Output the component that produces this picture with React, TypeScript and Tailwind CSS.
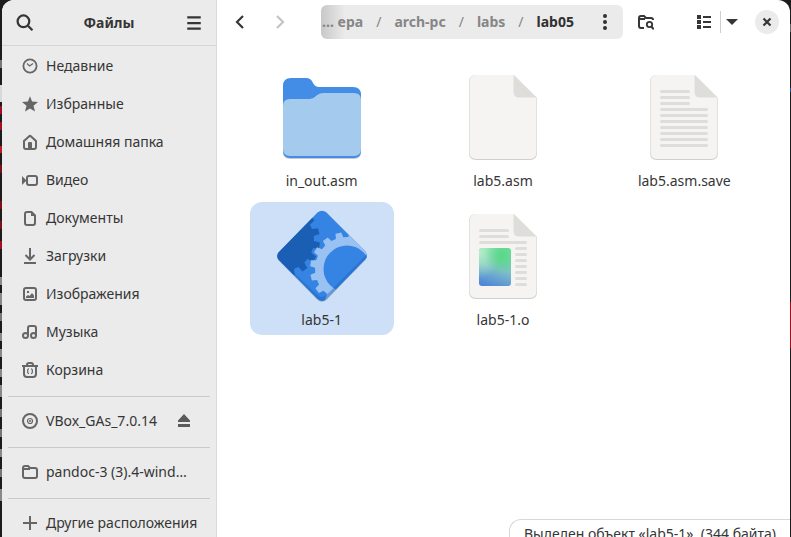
import type { ReactNode } from "react";

function Glyph({ children, size = 16 }: { children: ReactNode; size?: number }) {
  return (
    <svg
      width={size}
      height={size}
      viewBox="0 0 16 16"
      fill="none"
      stroke="currentColor"
      strokeWidth="2"
      className="shrink-0"
      aria-hidden="true"
    >
      {children}
    </svg>
  );
}

const places: { name: string; icon: ReactNode }[] = [
  {
    name: "Недавние",
    icon: (
      <>
        <circle cx="8" cy="8" r="6.6" strokeWidth="1.8" />
        <path d="M5 5.5 7.6 8 11 5.5" strokeWidth="1.2" />
      </>
    ),
  },
  {
    name: "Избранные",
    icon: (
      <path
        d="M8 0.3 10.1 5.5 16 6 11.5 9.8 13 15.6 8 12.4 3 15.6 4.5 9.8 0 6 5.9 5.5Z"
        fill="currentColor"
        stroke="none"
      />
    ),
  },
  {
    name: "Домашняя папка",
    icon: (
      <>
        <path d="M2 7 7.2 2.2Q8 1.5 8.8 2.2L14 7V13Q14 15 12 15H4Q2 15 2 13Z" />
        <path d="M6 15V9Q6 8 7 8H9Q10 8 10 9V15Z" fill="currentColor" stroke="none" />
      </>
    ),
  },
  {
    name: "Видео",
    icon: (
      <>
        <rect x="5" y="4" width="10" height="9" rx="2" />
        <path d="M0 4 4 8V9L0 13Z" fill="currentColor" stroke="none" />
      </>
    ),
  },
  {
    name: "Документы",
    icon: (
      <>
        <path d="M5 2H9.5L13 5.5V13Q13 15 11 15H5Q3 15 3 13V4Q3 2 5 2Z" />
        <path d="M9 1V6H14Z" fill="currentColor" stroke="none" />
      </>
    ),
  },
  {
    name: "Загрузки",
    icon: <path d="M8 0V11M3.5 7 8 11.5 12.5 7M2 15H14" />,
  },
  {
    name: "Изображения",
    icon: (
      <>
        <rect x="2" y="2" width="12" height="12" rx="2" />
        <path
          d="M4 12V10.5L6 9 7.5 10 10 7 12 9.5V12ZM5 5H7V7H5Z"
          fill="currentColor"
          stroke="none"
        />
      </>
    ),
  },
  {
    name: "Музыка",
    icon: (
      <>
        <path d="M6 11.5V4Q6 2 8 2H12Q14 2 14 4V11.5" />
        <circle cx="3.5" cy="11.5" r="2.5" />
        <circle cx="11.5" cy="11.5" r="2.5" />
      </>
    ),
  },
  {
    name: "Корзина",
    icon: (
      <>
        <path d="M0 4H16M5 4V3Q5 1 7 1H9Q11 1 11 3V4M2 4V12Q2 15 5 15H11Q14 15 14 12V4" />
        <path d="M6.7 6.5 5.7 8V10.5L6.7 12M9.3 6.5 10.3 8V10.5L9.3 12" strokeWidth="1.2" />
      </>
    ),
  },
];

function Place({ name, icon, children }: { name: string; icon: ReactNode; children?: ReactNode }) {
  return (
    <li className="flex h-[38px] items-center pl-5">
      <a href="#" className="flex min-w-0 flex-1 items-center gap-2">
        <span className="text-[#666666]">
          <Glyph>{icon}</Glyph>
        </span>
        <span className="whitespace-nowrap">{name}</span>
      </a>
      {children}
    </li>
  );
}

function Divider() {
  return <li role="separator" className="mx-1.5 mb-[5px] mt-[7px] h-px bg-[#cacaca]" />;
}

function Sidebar() {
  return (
    <aside className="flex w-[215px] shrink-0 flex-col border-r border-[#dadada] bg-[#ebebeb]">
      <header className="flex h-[46px] shrink-0 items-center justify-between border-b border-[#d5d5d5] px-[13px]">
        <button aria-label="Поиск">
          <Glyph size={18}>
            <circle cx="7.5" cy="6.5" r="5.2" />
            <path d="m11.500 10.500 4 4" />
          </Glyph>
        </button>
        <h1 className="text-sm font-bold">Файлы</h1>
        <button aria-label="Меню">
          <Glyph size={18}>
            <path d="M2 3H14M2 8H14M2 13H14" />
          </Glyph>
        </button>
      </header>
      <ul className="mt-px text-sm">
        {places.map((p) => (
          <Place key={p.name} {...p} />
        ))}
        <Divider />
        <Place
          name="VBox_GAs_7.0.14"
          icon={
            <>
              <circle cx="8" cy="8" r="7" />
              <circle cx="8" cy="8" r="2.5" strokeWidth="1.2" />
              <circle cx="8" cy="8" r="1" fill="currentColor" stroke="none" />
            </>
          }
        >
          <button aria-label="Извлечь" className="mr-6 text-[#5a5a5a]">
            <Glyph>
              <path
                d="M8 1 14 7.5V9H2V7.5ZM2 11H14V14H2Z"
                fill="currentColor"
                stroke="none"
              />
            </Glyph>
          </button>
        </Place>
        <Divider />
        <Place
          name="pandoc-3 (3).4-wind…"
          icon={<path d="M1 12V4Q1 2 3 2H6L8 4H13Q15 4 15 6V12Q15 14 13 14H3Q1 14 1 12ZM1 5H8" />}
        />
        <Divider />
        <Place name="Другие расположения" icon={<path d="M8 1V15M1 8H15" />} />
      </ul>
    </aside>
  );
}

function Toolbar() {
  return (
    <header className="flex h-11 shrink-0 items-center pl-1.5 pr-[11px]">
      <button aria-label="Назад" className="flex size-[34px] items-center justify-center">
        <Glyph>
          <path d="M11 2 5 8 11 14" strokeWidth="2.2" />
        </Glyph>
      </button>
      <button
        aria-label="Вперёд"
        disabled
        className="ml-1.5 flex size-[34px] items-center justify-center text-[#c4c4c4]"
      >
        <Glyph>
          <path d="M5 2 11 8 5 14" strokeWidth="2.2" />
        </Glyph>
      </button>
      <nav
        aria-label="Путь"
        className="ml-6 flex h-[34px] min-w-0 flex-1 items-center rounded-md bg-[#ebebeb] bg-linear-to-r from-[#c8c8c8] from-0% to-[#ebebeb] to-8% text-sm font-bold text-[#868686]"
      >
        <ol className="flex flex-1 items-center gap-[13px] whitespace-nowrap pl-px">
          <li>
            <a href="#">… epa</a>
          </li>
          <li className="font-normal">/</li>
          <li>
            <a href="#">arch-pc</a>
          </li>
          <li className="font-normal">/</li>
          <li>
            <a href="#">labs</a>
          </li>
          <li className="font-normal">/</li>
          <li className="text-[#303030]">
            <a href="#">lab05</a>
          </li>
        </ol>
        <button aria-label="Меню папки" className="mr-2.5 text-[#303030]">
          <Glyph>
            <path
              d="M8 0a2 2 0 1 1 0 4a2 2 0 1 1 0-4M8 6a2 2 0 1 1 0 4a2 2 0 1 1 0-4M8 12a2 2 0 1 1 0 4a2 2 0 1 1 0-4"
              fill="currentColor"
              stroke="none"
            />
          </Glyph>
        </button>
      </nav>
      <button
        aria-label="Поиск в папке"
        className="ml-1.5 flex size-[34px] items-center justify-center"
      >
        <Glyph>
          <path d="M6 14H3Q1 14 1 12V4Q1 2 3 2H6L8 4H13Q15 4 15 6M1 5H7" />
          <circle cx="11.5" cy="10.5" r="2.7" strokeWidth="1.8" />
          <path d="m13.3 12.5 2.5 2.7" />
        </Glyph>
      </button>
      <button
        aria-label="Вид списком"
        className="ml-6 flex h-[34px] w-[33px] items-center justify-center"
      >
        <Glyph>
          <path d="M1 1H5V5H1ZM1 6H5V10H1ZM1 11H5V15H1Z" fill="currentColor" stroke="none" />
          <path d="M7 3H15M7 8H15M7 13H15" />
        </Glyph>
      </button>
      <span className="h-[22px] w-px bg-[#cfcfcf]" />
      <button
        aria-label="Параметры вида"
        className="flex h-[34px] w-[22px] items-center justify-center"
      >
        <Glyph>
          <path d="M2 5H14L8 11Z" fill="currentColor" stroke="none" />
        </Glyph>
      </button>
      <button
        aria-label="Закрыть"
        className="ml-3 flex size-6 items-center justify-center rounded-full bg-[#ebebeb]"
      >
        <Glyph>
          <path d="m4.5 4.5 7 7m0-7-7 7" strokeWidth="2.2" />
        </Glyph>
      </button>
    </header>
  );
}

/** Outline of a cog with trapezoid teeth; `turn` is the angle of the first tooth in degrees. */
function cog(cx: number, cy: number, body: number, tip: number, turn: number, teeth = 16) {
  const step = 360 / teeth;
  const points: string[] = [];
  for (let i = 0; i < teeth; i++) {
    const a = turn + i * step;
    const corners: [number, number][] = [
      [a - 6.8, body],
      [a - 4.6, tip],
      [a + 4.6, tip],
      [a + 6.8, body],
    ];
    for (const [deg, r] of corners) {
      const t = (deg * Math.PI) / 180;
      points.push(`${(cx + r * Math.cos(t)).toFixed(2)},${(cy + r * Math.sin(t)).toFixed(2)}`);
    }
  }
  return points.join(" ");
}

function FolderArt() {
  return (
    <svg width="96" height="96" viewBox="0 0 96 96" aria-hidden="true">
      <path d="M9 23V83Q9 90 16 90H80Q87 90 87 83V25Z" fill="#c9c9c9" />
      <path
        d="M9 17Q9 9 17 9H32Q37 9 39 14Q41 18 45 18H79Q87 18 87 26V82Q87 89 80 89H16Q9 89 9 82Z"
        fill="#438de6"
      />
      <path
        d="M9 37Q9 30 16 30H36Q39 30 42 27Q45 24 50 24H80Q87 24 87 31V80Q87 87 80 87H16Q9 87 9 80Z"
        fill="#a4caee"
      />
    </svg>
  );
}

function Sheet({ children }: { children?: ReactNode }) {
  return (
    <svg width="96" height="96" viewBox="0 0 96 96" aria-hidden="true">
      <path
        d="M21 6H59L82 29V84Q82 91 75 91H21Q14 91 14 84V13Q14 6 21 6Z"
        fill="#cfcfcd"
      />
      <path
        d="M21 6H59L81.5 28.5V83Q81.5 90 75 90H21Q14.5 90 14.5 83V13Q14.5 6 21 6Z"
        fill="#f5f4f3"
      />
      <path d="M58.5 6V23Q58.5 28.5 64 28.5H81.5Z" fill="#deddda" />
      {children}
    </svg>
  );
}

function TextArt() {
  return (
    <Sheet>
      <path
        d="M25.5 22.5H52.5M25.5 28.5H52.5M25.5 34.5H52.5M25.5 40.5H70.5M25.5 46.5H70.5M25.5 52.5H70.5M25.5 58.5H70.5M25.5 64.5H70.5M25.5 70.5H70.5M25.5 76.5H70.5"
        stroke="#deddda"
        strokeWidth="3"
        strokeLinecap="round"
      />
    </Sheet>
  );
}

function ObjectArt() {
  return (
    <Sheet>
      <defs>
        <linearGradient id="tile" x1="0.3" y1="1" x2="0.6" y2="0">
          <stop offset="0" stopColor="#4f87d8" />
          <stop offset="0.5" stopColor="#7fbfc8" />
          <stop offset="1" stopColor="#75dda0" />
        </linearGradient>
        <radialGradient id="glow" cx="0.7" cy="0.2" r="0.5">
          <stop offset="0" stopColor="#57d986" />
          <stop offset="1" stopColor="#57d986" stopOpacity="0" />
        </radialGradient>
        <radialGradient id="mist" cx="0" cy="0.1" r="0.7">
          <stop offset="0" stopColor="#b5efc5" />
          <stop offset="1" stopColor="#b5efc5" stopOpacity="0" />
        </radialGradient>
      </defs>
      <path
        d="M25.5 22.5H52.5M25.5 28.5H52.5M25.5 34.5H70.5M61.5 40.5H70.5M61.5 46.5H70.5M61.5 52.5H70.5M61.5 58.5H70.5M61.5 64.5H70.5M61.5 70.5H70.5M61.5 76.5H70.5"
        stroke="#deddda"
        strokeWidth="3"
        strokeLinecap="round"
      />
      <rect x="24" y="40" width="32" height="38" rx="3" fill="url(#tile)" />
      <rect x="24" y="40" width="32" height="38" rx="3" fill="url(#mist)" />
      <rect x="24" y="40" width="32" height="38" rx="3" fill="url(#glow)" />
    </Sheet>
  );
}

function ProgramArt() {
  const diamond =
    "M43.500 4.500Q48 1 52.500 4.500L91.500 43.500Q94 48 91.500 51L52.500 91Q48 95 43.500 91L4.500 51.500Q2 48 4.500 44.500Z";
  return (
    <svg width="96" height="96" viewBox="0 0 96 96" aria-hidden="true">
      <defs>
        <clipPath id="diamond">
          <path d={diamond} />
        </clipPath>
      </defs>
      <path d={diamond} fill="#a9bcd6" transform="translate(0 1)" />
      <g clipPath="url(#diamond)">
        <rect width="96" height="96" fill="#3584e4" />
        <polygon points={cog(9, 32, 31, 37, -14)} fill="#1a5fb4" />
        <polygon points={cog(73, 61, 32, 37, 189)} fill="#99c1f1" />
        <circle cx="73" cy="61" r="23.5" fill="#3584e4" />
        <path d="M2 48 43.5 87Q48 91 52.5 87L94 45V96H2Z" fill="#1a5fb4" fillOpacity="0.4" />
      </g>
    </svg>
  );
}

const files: { name: string; art: ReactNode; selected?: boolean }[] = [
  { name: "in_out.asm", art: <FolderArt /> },
  { name: "lab5.asm", art: <Sheet /> },
  { name: "lab5.asm.save", art: <TextArt /> },
  { name: "lab5-1", art: <ProgramArt />, selected: true },
  { name: "lab5-1.o", art: <ObjectArt /> },
];

function FileGrid() {
  return (
    <ul className="grid grid-cols-3 justify-items-center gap-y-1.5 pl-3.5 pr-[15px] pt-[19px] text-sm">
      {files.map((f) => (
        <li key={f.name}>
          <button
            aria-pressed={!!f.selected}
            className={`flex w-36 flex-col items-center rounded-xl pb-[5px] pt-1.5 ${
              f.selected ? "bg-[#cde0f7]" : ""
            }`}
          >
            {f.art}
            <span className="mt-1.5 leading-5">{f.name}</span>
          </button>
        </li>
      ))}
    </ul>
  );
}

type Mark = { gap: string; mark: string };

/** Slivers of the terminal that show on either side of the window. */
const leftMarks: Mark[] = [
  { gap: "h-[60px]", mark: "h-2 bg-[#777777]" },
  { gap: "h-[17px]", mark: "h-[17px] bg-[#d8d8d8]" },
  { gap: "h-1", mark: "h-2 bg-[#a01020]" },
  { gap: "h-2", mark: "h-2 bg-[#a01020]" },
  { gap: "h-4", mark: "h-[7px] bg-[#c01c28]" },
  { gap: "h-3", mark: "h-2 bg-[#801018]" },
  { gap: "h-7", mark: "h-2 bg-[#801018]" },
  { gap: "h-3", mark: "h-2 bg-[#801018]" },
  { gap: "h-3", mark: "h-2 bg-[#a01020]" },
  { gap: "h-7", mark: "h-2 bg-[#888888]" },
  { gap: "h-2", mark: "h-3 bg-[#888888]" },
  { gap: "h-2", mark: "h-2 bg-[#777777]" },
  { gap: "h-3", mark: "h-2 bg-[#888888]" },
  { gap: "h-2", mark: "h-2 bg-[#888888]" },
  { gap: "h-3", mark: "h-2 bg-[#888888]" },
  { gap: "h-2", mark: "h-3 bg-[#888888]" },
  { gap: "h-3", mark: "h-2 bg-[#777777]" },
  { gap: "h-3", mark: "h-2 bg-[#777777]" },
  { gap: "h-3", mark: "h-2 bg-[#888888]" },
  { gap: "h-3", mark: "h-2 bg-[#777777]" },
  { gap: "h-3", mark: "h-3 bg-[#888888]" },
];

const rightMarks: Mark[] = [
  { gap: "h-6", mark: "h-2 bg-[#666666]" },
  { gap: "h-14", mark: "h-1 bg-[#1a4a9a]" },
  { gap: "h-[210px]", mark: "h-[46px] bg-[#a01020]" },
];

function TerminalEdge({ marks, className }: { marks: Mark[]; className: string }) {
  return (
    <div className={className} aria-hidden="true">
      {marks.map((m, i) => (
        <div key={i}>
          <div className={m.gap} />
          <div className={m.mark} />
        </div>
      ))}
    </div>
  );
}

export default function App() {
  return (
    <div className="flex h-screen overflow-hidden bg-[#1c1c1c] font-['Noto_Sans',sans-serif] text-[#363636]">
      <TerminalEdge marks={leftMarks} className="w-0.5 shrink-0" />
      <div className="relative flex min-w-0 flex-1 overflow-hidden rounded-t-xl bg-white">
        <Sidebar />
        <main className="flex min-w-0 flex-1 flex-col">
          <Toolbar />
          <FileGrid />
        </main>
        <div
          role="status"
          className="absolute -bottom-[11px] right-0 rounded-tl-xl border-l border-t border-[#d8d8d8] bg-white px-3.5 py-1 text-sm leading-5"
        >
          Выделен объект «lab5-1», (344 байта)
        </div>
      </div>
      <TerminalEdge marks={rightMarks} className="w-px shrink-0" />
    </div>
  );
}
